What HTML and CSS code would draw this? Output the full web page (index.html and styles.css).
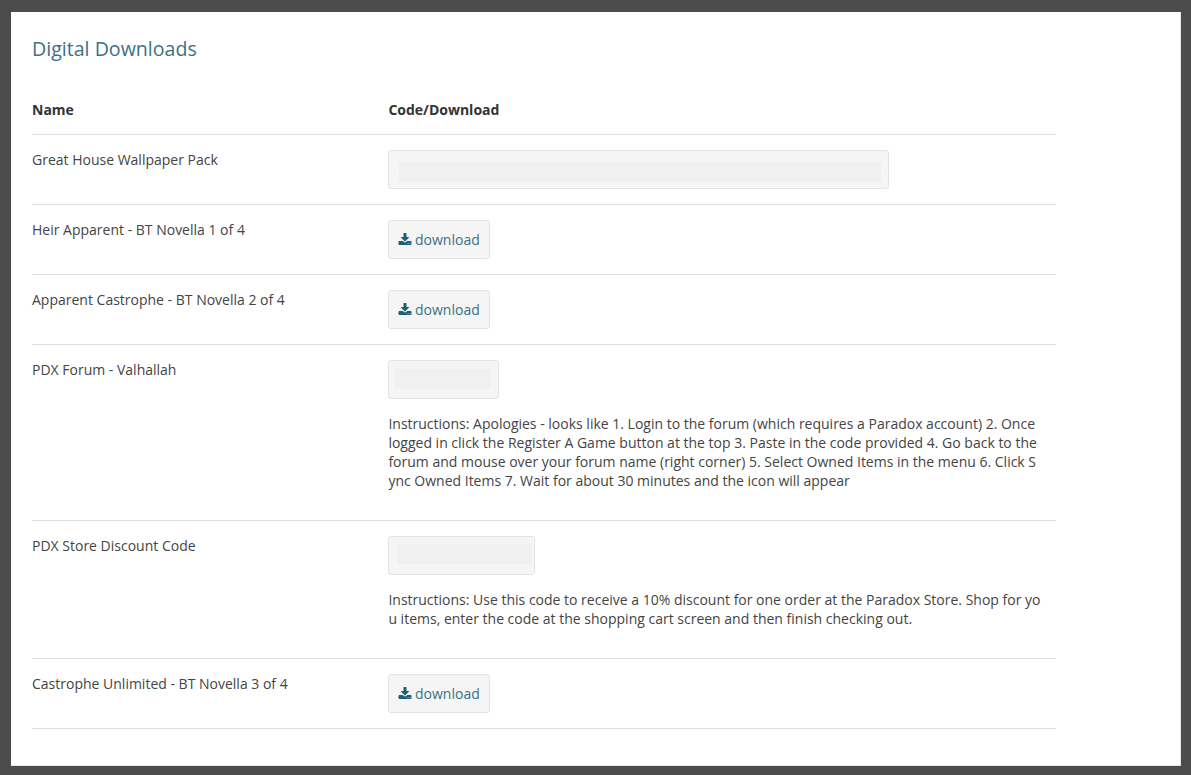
FILE: index.html
```html
<!DOCTYPE html>
<html lang="en">
<head>
<meta charset="utf-8">
<title>Digital Downloads</title>
<link rel="stylesheet" href="styles.css">
</head>
<body>
<main class="card">
  <h1 class="title">Digital Downloads</h1>
  <table class="downloads">
    <thead>
      <tr><th class="col-name">Name</th><th class="col-code">Code/Download</th></tr>
    </thead>
    <tbody>
      <tr>
        <td>Great House Wallpaper Pack</td>
        <td><div class="code code-wide"><span class="mask"></span></div></td>
      </tr>
      <tr>
        <td>Heir Apparent - BT Novella 1 of 4</td>
        <td><a class="btn" href="#"><svg class="icon" viewBox="0 0 1792 1792"><path d="M1344 1344q0-26-19-45t-45-19-45 19-19 45 19 45 45 19 45-19 19-45zm256 0q0-26-19-45t-45-19-45 19-19 45 19 45 45 19 45-19 19-45zm128-224v320q0 40-28 68t-68 28h-1472q-40 0-68-28t-28-68v-320q0-40 28-68t68-28h465l135 136q58 56 136 56t136-56l136-136h464q40 0 68 28t28 68zm-325-569q17 41-14 70l-448 448q-18 19-45 19t-45-19l-448-448q-31-29-14-70 17-39 59-39h256v-448q0-26 19-45t45-19h256q26 0 45 19t19 45v448h256q42 0 59 39z"/></svg> download</a></td>
      </tr>
      <tr>
        <td>Apparent Castrophe - BT Novella 2 of 4</td>
        <td><a class="btn" href="#"><svg class="icon" viewBox="0 0 1792 1792"><path d="M1344 1344q0-26-19-45t-45-19-45 19-19 45 19 45 45 19 45-19 19-45zm256 0q0-26-19-45t-45-19-45 19-19 45 19 45 45 19 45-19 19-45zm128-224v320q0 40-28 68t-68 28h-1472q-40 0-68-28t-28-68v-320q0-40 28-68t68-28h465l135 136q58 56 136 56t136-56l136-136h464q40 0 68 28t28 68zm-325-569q17 41-14 70l-448 448q-18 19-45 19t-45-19l-448-448q-31-29-14-70 17-39 59-39h256v-448q0-26 19-45t45-19h256q26 0 45 19t19 45v448h256q42 0 59 39z"/></svg> download</a></td>
      </tr>
      <tr>
        <td>PDX Forum - Valhallah</td>
        <td>
          <div class="code code-small"><span class="mask"></span></div>
          <p class="note">Instructions: Apologies - looks like 1. Login to the forum (which requires a Paradox account) 2. Once logged in click the Register A Game button at the top 3. Paste in the code provided 4. Go back to the forum and mouse over your forum name (right corner) 5. Select Owned Items in the menu 6. Click Sync Owned Items 7. Wait for about 30 minutes and the icon will appear</p>
        </td>
      </tr>
      <tr>
        <td>PDX Store Discount Code</td>
        <td>
          <div class="code code-mid"><span class="mask"></span></div>
          <p class="note">Instructions: Use this code to receive a 10% discount for one order at the Paradox Store. Shop for you items, enter the code at the shopping cart screen and then finish checking out.</p>
        </td>
      </tr>
      <tr>
        <td>Castrophe Unlimited - BT Novella 3 of 4</td>
        <td><a class="btn" href="#"><svg class="icon" viewBox="0 0 1792 1792"><path d="M1344 1344q0-26-19-45t-45-19-45 19-19 45 19 45 45 19 45-19 19-45zm256 0q0-26-19-45t-45-19-45 19-19 45 19 45 45 19 45-19 19-45zm128-224v320q0 40-28 68t-68 28h-1472q-40 0-68-28t-28-68v-320q0-40 28-68t68-28h465l135 136q58 56 136 56t136-56l136-136h464q40 0 68 28t28 68zm-325-569q17 41-14 70l-448 448q-18 19-45 19t-45-19l-448-448q-31-29-14-70 17-39 59-39h256v-448q0-26 19-45t45-19h256q26 0 45 19t19 45v448h256q42 0 59 39z"/></svg> download</a></td>
      </tr>
    </tbody>
  </table>
</main>
</body>
</html>
```
FILE: styles.css
```css
* { box-sizing: border-box; }
html, body { height: 100%; }
body {
  margin: 0;
  padding: 12px 10px 9px 11px;
  background: #4a4b4a;
  font-family: "Open Sans", sans-serif;
  font-size: 14px;
  line-height: 19px;
  color: #444;
  overflow: hidden;
}
.card {
  height: 754px;
  padding: 23px 124px 0 21px;
  background: #fff;
  border-right: 1px solid #e6e6e6;
  border-bottom: 1px solid #e6e6e6;
}
.title {
  margin: 0 0 22px;
  font-size: 19.6px;
  line-height: 28px;
  font-weight: 400;
  color: #3e7085;
}
.downloads {
  width: 1024px;
  border-collapse: collapse;
  table-layout: fixed;
}
.downloads th, .downloads td {
  padding: 15px 0;
  text-align: left;
  vertical-align: top;
  border-bottom: 1px solid #ddd;
}
.downloads th {
  font-weight: 700;
  color: #333;
}
.col-name { width: 356px; }
.downloads .col-code { padding-left: 0.4px; }
.code {
  display: flex;
  height: 39px;
  background: #f5f5f5;
  border: 1px solid #e3e3e3;
  border-radius: 3px;
}
.mask { flex: 1; background: #f0f0f0; }
.code-wide { width: 501px; padding: 11px 7px 6px 10px; }
.code-small { width: 111px; padding: 8px 7px 9px 6px; }
.code-mid { width: 147px; padding: 7px 2px 10px 9px; }
.btn {
  display: inline-flex;
  align-items: center;
  gap: 3px;
  height: 39px;
  padding: 0 9px;
  background: #f5f5f5;
  border: 1px solid #e3e3e3;
  border-radius: 3px;
  font-size: 14px;
  color: #3e7085;
  text-decoration: none;
  vertical-align: top;
}
.icon { width: 14px; height: 14px; fill: #1f5f78; }
.note {
  margin: 15px 0;
  padding: 0 15px 0 0.4px;
  word-break: break-all;
}
```
